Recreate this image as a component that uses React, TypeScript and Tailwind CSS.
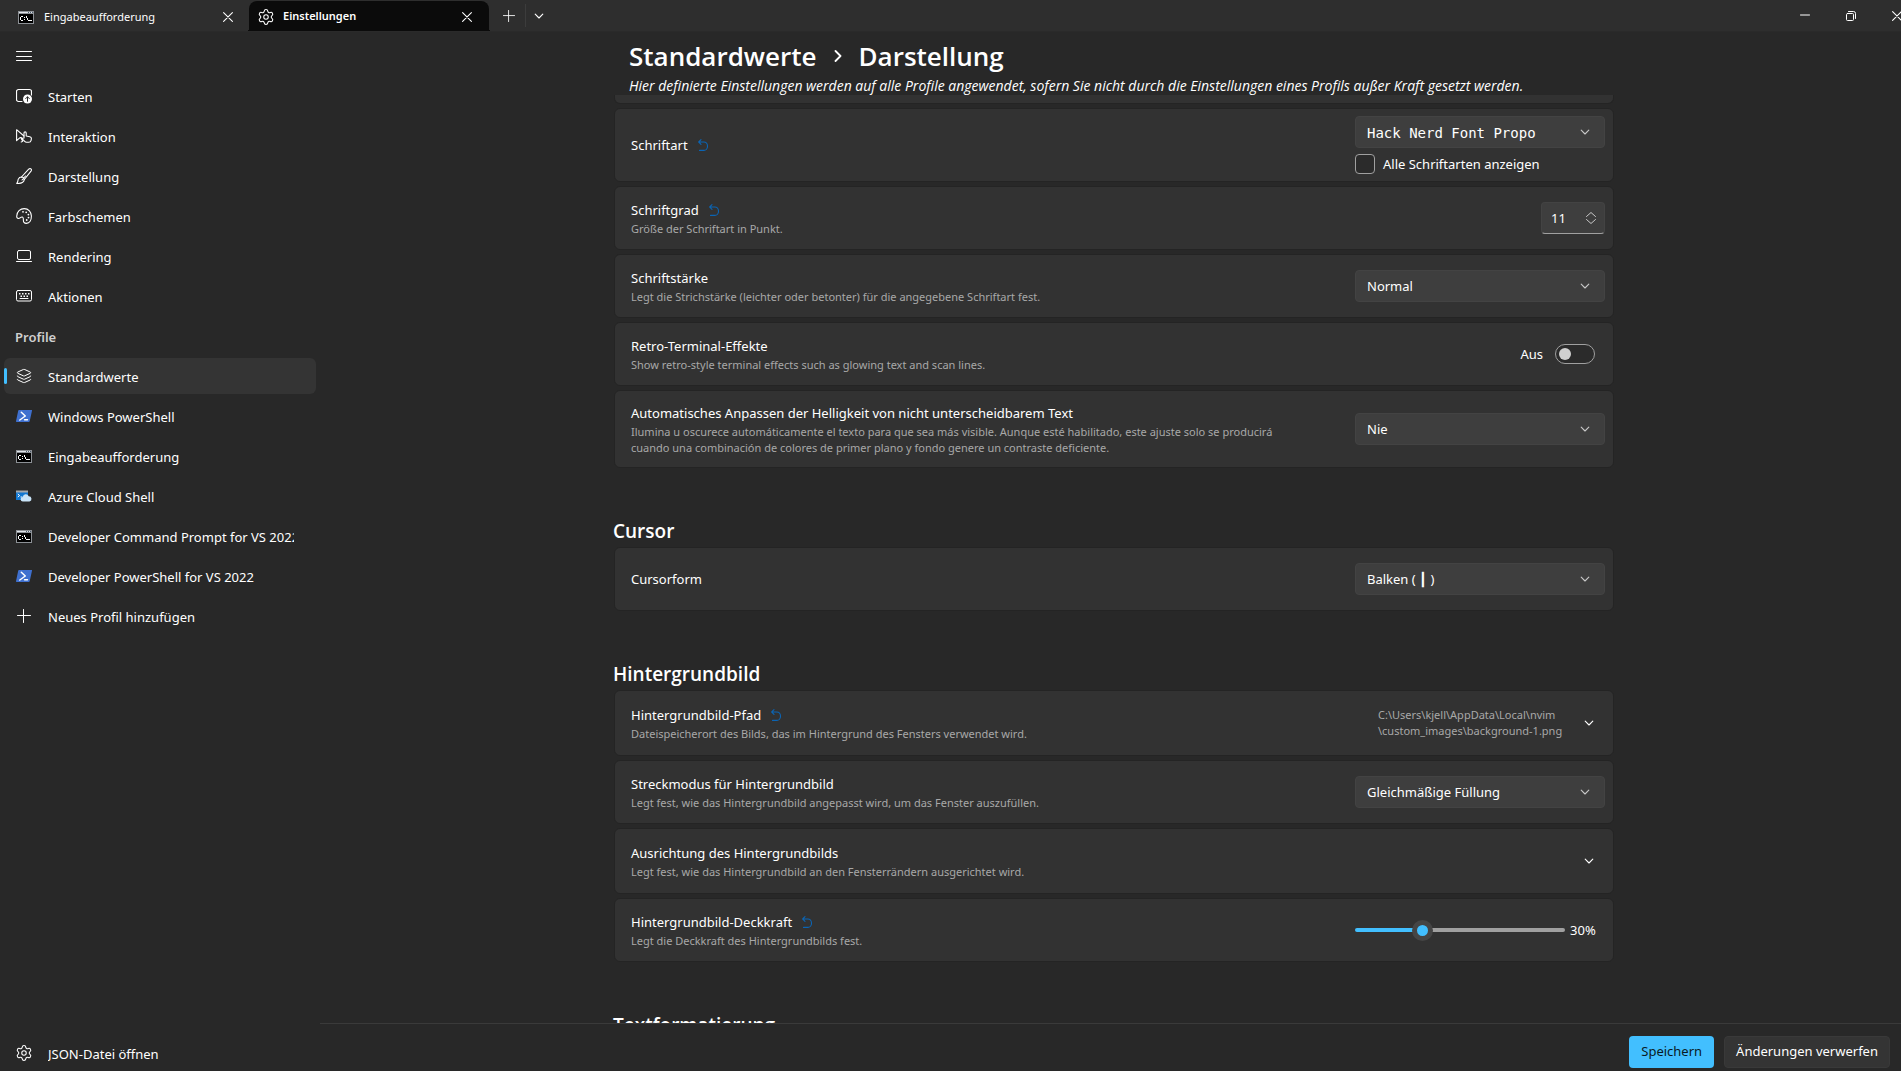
import { useState, type ReactNode } from "react";
import { Layers, Settings } from "lucide-react";

const stroke = {
  fill: "none",
  stroke: "currentColor",
  strokeWidth: 1,
  strokeLinecap: "round" as const,
  strokeLinejoin: "round" as const,
};

function Chevron({ className = "" }: { className?: string }) {
  return (
    <svg className={`h-2 w-2.5 ${className}`} viewBox="0 0 10 8" {...stroke} strokeWidth={1.1} aria-hidden="true">
      <path d="M1.200 2.200 5 6l3.800-3.800" />
    </svg>
  );
}

function CloseGlyph() {
  return (
    <svg className="size-2.5" viewBox="0 0 10 10" {...stroke} strokeWidth={1.1} aria-hidden="true">
      <path d="M.6.6 9.400 9.400M9.400.6.6 9.400" />
    </svg>
  );
}

function Plus({ className }: { className: string }) {
  return (
    <svg className={className} viewBox="0 0 14 14" {...stroke} aria-hidden="true">
      <path d="M6.500 .5v13M.5 6.500h13" />
    </svg>
  );
}

function UndoGlyph() {
  return (
    <svg className="h-3 w-2.5" viewBox="0 0 10 12" {...stroke} strokeWidth={1.1} aria-hidden="true">
      <path d="M3 .6.7 3 3 5.400M.9 3h5A3.600 4.200 0 0 1 5.900 11.400H1.500" />
    </svg>
  );
}

function StartIcon() {
  return (
    <svg className="size-4" viewBox="0 0 16 16" {...stroke} aria-hidden="true">
      <path d="M6 13.500H2.500a2 2 0 0 1-2-2v-8a2 2 0 0 1 2-2h11a2 2 0 0 1 2 2V7" strokeWidth={1.2} />
      <circle cx="11.500" cy="11" r="4.500" fill="currentColor" stroke="none" />
      <path d="M11.500 13.300V8.900M9.700 10.600l1.800-1.800 1.800 1.800" stroke="#282828" />
    </svg>
  );
}

function InteractionIcon() {
  return (
    <svg className="size-4" viewBox="0 0 16 16" {...stroke} strokeWidth={1.1} aria-hidden="true">
      <path d="M6.500 12 5 9.500l-1 .2-3.400 3V1.700L8 8" />
      <path d="M6.500 10.200 8 10V5a1.100 1.100 0 0 1 2.200 0v3l3.600.8c1 .2 1.700.9 1.600 1.900l-.3 1.600a2.500 2.500 0 0 1-2.500 2H10.500c-.8 0-1.300-.3-1.800-.9l-2.500-2.600c-.3-.4-.1-.7.300-.6Z" />
      <path d="m5 9.500 1.700 3.800-1.500.7" />
    </svg>
  );
}

function BrushIcon() {
  return (
    <svg className="size-4" viewBox="0 0 16 16" {...stroke} strokeWidth={1.100} aria-hidden="true">
      <path d="M5.500 9 12.700 1.200c1.700-1.500 3.500.1 2.300 1.900L8.300 11.500" />
      <path d="M5.500 9c1.600.1 2.700 1.100 2.800 2.700-.5 3-3.600 4-7.600 3.700 1.500-1.400.9-2.700 1.600-4.300C2.900 9.800 4.100 9 5.500 9ZM6 12l3.500-4" />
    </svg>
  );
}

function PaletteIcon() {
  return (
    <svg className="size-4" viewBox="0 0 16 16" {...stroke} strokeWidth={1.100} aria-hidden="true">
      <path d="M.7 8.200C.9 3.700 4.200.6 8.200.6c4.300 0 7.200 3.400 7.200 7.500 0 3.800-1.700 7.300-5 7.300-2.300 0-3.200-1.500-3-3.400.1-1.500.1-2.500-1-2.900-.8-.3-1.500.2-2.300.8-1.600 1.200-3.500.500-3.400-1.700Z" />
      <g fill="currentColor" stroke="none">
        <circle cx="7" cy="3.800" r=".9" />
        <circle cx="10.200" cy="4.300" r=".9" />
        <circle cx="12.400" cy="6.600" r=".9" />
        <circle cx="12.500" cy="9.600" r=".9" />
        <circle cx="10.700" cy="12" r=".9" />
      </g>
    </svg>
  );
}

function LaptopIcon() {
  return (
    <svg className="size-4" viewBox="0 0 16 16" {...stroke} aria-hidden="true">
      <rect x="1.500" y="2.500" width="13" height="9" rx="1.500" />
      <path d="M.5 13.500h15" />
    </svg>
  );
}

function KeyboardIcon() {
  return (
    <svg className="size-4" viewBox="0 0 16 16" {...stroke} aria-hidden="true">
      <rect x=".5" y="2.500" width="15" height="10.500" rx="1.500" />
      <path d="M4 10.500h8" />
      <g fill="currentColor" stroke="none">
        <rect x="3" y="5" width="1.500" height="1.500" />
        <rect x="6" y="5" width="1.500" height="1.500" />
        <rect x="9" y="5" width="1.500" height="1.500" />
        <rect x="12" y="5" width="1.500" height="1.500" />
        <rect x="4.500" y="7.500" width="1.500" height="1.500" />
        <rect x="7.500" y="7.500" width="1.500" height="1.500" />
        <rect x="10.500" y="7.500" width="1.500" height="1.500" />
      </g>
    </svg>
  );
}

function PowerShellIcon() {
  return (
    <svg className="size-4" viewBox="0 0 16 16" aria-hidden="true">
      <path d="M3 2h12.500c.4 0 .6.300.5.700l-2.300 10.500c-.1.500-.5.800-1 .8H.6c-.4 0-.7-.3-.6-.8L2.200 2.700c.1-.4.400-.7.800-.7Z" fill="#3f70cf" />
      <path d="m5.300 4.300 4 3.700-5.500 4" fill="none" stroke="#fff" strokeWidth="1.500" strokeLinecap="round" strokeLinejoin="round" />
      <path d="M8.500 11.800h3" stroke="#fff" strokeWidth="1.400" strokeLinecap="round" />
    </svg>
  );
}

function CmdIcon() {
  return (
    <svg className="size-4" viewBox="0 0 16 16" shapeRendering="crispEdges" aria-hidden="true">
      <rect x="0" y="2" width="16" height="13" fill="#8d9196" />
      <rect x="1" y="3" width="14" height="1" fill="#dfe3e8" />
      <path d="M10 3h1v1h-1zM12 3h1v1h-1zM14 3h1v1h-1z" fill="#4b5a6b" />
      <rect x="1" y="5" width="14" height="9" fill="#000" />
      <path d="M3 7h2v1H3zM2 8h1v3H2zM3 11h2v1H3zM6 8h1v1H6zM6 10h1v1H6zM8 7h1v2H8zM9 9h1v2H9zM10 11h1v1h-1zM11 11h3v1h-3z" fill="#fff" />
    </svg>
  );
}

function CloudShellIcon() {
  return (
    <svg className="size-4" viewBox="0 0 16 16" aria-hidden="true">
      <path d="M0 3h12v9H0z" fill="#1177d1" />
      <path d="M0 2.500h12V4.500H0z" fill="#a3a9ae" />
      <path d="m1.800 6 1.800 1.500L1.800 9M4.500 9h2" fill="none" stroke="#fff" strokeWidth="1" />
      <path d="M7 13.500a2.300 2.300 0 0 1-.2-4.600 3.100 3.100 0 0 1 5.900-.7A2.700 2.700 0 0 1 13.500 13.500Z" fill="#c9e4f8" />
    </svg>
  );
}

function NavItem({ icon, label, active = false }: { icon: ReactNode; label: string; active?: boolean }) {
  return (
    <button
      type="button"
      className={`relative flex h-9 w-full shrink-0 items-center gap-4 rounded-md pr-[22px] pl-3 text-left ${active ? "bg-[#343434]" : ""}`}
    >
      {active && <span className="absolute top-2.5 left-0 h-4 w-[3px] rounded-full bg-[#42bfff]" />}
      <span className="flex size-4 shrink-0 items-center justify-center">{icon}</span>
      <span className="min-w-0 flex-1 overflow-hidden pt-[3px] whitespace-nowrap">{label}</span>
    </button>
  );
}

function Card({
  id,
  title,
  description,
  reset = false,
  height = "h-16",
  children,
}: {
  id?: string;
  title: string;
  description?: string;
  reset?: boolean;
  height?: string;
  children: ReactNode;
}) {
  return (
    <div className={`flex shrink-0 items-center justify-between gap-6 rounded-md border border-[#242424] bg-[#323232] pr-2 pl-4 ${height}`}>
      <div className="min-w-0 max-w-[676px]">
        <div className="flex items-center gap-2.5 leading-5">
          {id ? <label htmlFor={id}>{title}</label> : <span>{title}</span>}
          {reset && (
            <button type="button" aria-label={`${title} zurücksetzen`} className="text-[#0b64b3]">
              <UndoGlyph />
            </button>
          )}
        </div>
        {description && <p className="pt-px text-[11px] leading-4 text-[#a8a8a8]">{description}</p>}
      </div>
      {children}
    </div>
  );
}

function Dropdown({ id, value, mono = false }: { id: string; value: string; mono?: boolean }) {
  return (
    <div className="relative w-[250px] shrink-0">
      <select
        id={id}
        className={`h-8 w-full appearance-none rounded-[4px] border border-[#434343] bg-[#3e3e3e] pt-px pr-8 pl-[11px] text-white ${mono ? "font-['DejaVu_Sans_Mono',monospace] text-sm" : ""}`}
      >
        <option>{value}</option>
      </select>
      <Chevron className="pointer-events-none absolute top-3 right-[15px] text-[#c8c8c8]" />
    </div>
  );
}

function SectionTitle({ children }: { children: ReactNode }) {
  return <h2 className="-ml-px mt-[47px] shrink-0 font-['Open_Sans',sans-serif] text-[19px] leading-6 font-semibold">{children}</h2>;
}

export default function App() {
  const [opacity, setOpacity] = useState(30);
  const [size, setSize] = useState("11");

  return (
    <div className="flex h-screen flex-col overflow-hidden bg-[#282828] font-['Noto_Sans','Open_Sans',sans-serif] text-[13px] text-white">
      <header className="flex h-8 shrink-0 items-stretch overflow-hidden border-b border-[#2a2a2a] bg-[#2e2e2e] text-[11px]">
        <div className="flex w-[249px] items-center pt-0.5 pl-[18px]">
          <CmdIcon />
          <span className="flex-1 pt-0.5 pl-2.5">Eingabeaufforderung</span>
          <button type="button" aria-label="Tab schließen" className="mr-[15px] flex size-3 items-center justify-center">
            <CloseGlyph />
          </button>
        </div>
        <div className="relative -mb-px mt-px flex w-60 items-center rounded-t-lg bg-[#0b0b0b] pl-2 font-semibold before:absolute before:bottom-0 before:-left-1 before:size-1 before:bg-[radial-gradient(circle_at_0_0,transparent_4px,#0b0b0b_4px)] after:absolute after:-right-1 after:bottom-0 after:size-1 after:bg-[radial-gradient(circle_at_100%_0,transparent_4px,#0b0b0b_4px)]">
          <Settings className="size-[18px]" strokeWidth={1.400} />
          <span className="flex-1 pl-2">Einstellungen</span>
          <button type="button" aria-label="Tab schließen" className="mr-4 flex size-3 items-center justify-center">
            <CloseGlyph />
          </button>
        </div>
        <button type="button" aria-label="Neuer Tab" className="flex w-9 items-center justify-center pl-1">
          <Plus className="size-3" />
        </button>
        <span className="my-1 w-px bg-[#3c3c3c]" />
        <button type="button" aria-label="Tabmenü" className="flex w-[26px] items-center justify-center">
          <Chevron />
        </button>
        <div className="-mr-[19px] ml-auto flex shrink-0">
          <button type="button" aria-label="Minimieren" className="flex w-[46px] items-center justify-center">
            <svg className="size-2.5" viewBox="0 0 10 10" {...stroke} aria-hidden="true">
              <path d="M.5 4h9" />
            </svg>
          </button>
          <button type="button" aria-label="Verkleinern" className="flex w-[46px] items-center justify-center">
            <svg className="size-2.5" viewBox="0 0 10 10" {...stroke} aria-hidden="true">
              <rect x=".5" y="2.500" width="7" height="7" rx="1" />
              <path d="M2.500.5h5a2 2 0 0 1 2 2v5" />
            </svg>
          </button>
          <button type="button" aria-label="Schließen" className="flex w-[46px] items-center justify-center">
            <CloseGlyph />
          </button>
        </div>
      </header>

      <div className="flex min-h-0 flex-1">
        <nav className="flex w-80 shrink-0 flex-col gap-1 px-1 pt-1.5 pb-0">
          <button type="button" aria-label="Navigation" className="flex h-9 w-10 items-center justify-center">
            <svg className="size-4" viewBox="0 0 16 16" {...stroke} aria-hidden="true">
              <path d="M.5 3.500h15M.5 8.500h15M.5 12.500h15" />
            </svg>
          </button>
          <NavItem icon={<StartIcon />} label="Starten" />
          <NavItem icon={<InteractionIcon />} label="Interaktion" />
          <NavItem icon={<BrushIcon />} label="Darstellung" />
          <NavItem icon={<PaletteIcon />} label="Farbschemen" />
          <NavItem icon={<LaptopIcon />} label="Rendering" />
          <NavItem icon={<KeyboardIcon />} label="Aktionen" />
          <h2 className="flex h-9 shrink-0 items-center pt-[3px] pl-[11px] font-semibold text-[#cfcfcf]">Profile</h2>
          <NavItem icon={<Layers className="size-4" strokeWidth={1.500} />} label="Standardwerte" active />
          <NavItem icon={<PowerShellIcon />} label="Windows PowerShell" />
          <NavItem icon={<CmdIcon />} label="Eingabeaufforderung" />
          <NavItem icon={<CloudShellIcon />} label="Azure Cloud Shell" />
          <NavItem icon={<CmdIcon />} label="Developer Command Prompt for VS 2022" />
          <NavItem icon={<PowerShellIcon />} label="Developer PowerShell for VS 2022" />
          <NavItem icon={<Plus className="size-3.5" />} label="Neues Profil hinzufügen" />
          <div className="mt-auto">
            <NavItem icon={<Settings className="size-[18px] shrink-0" strokeWidth={1.400} />} label="JSON-Datei öffnen" />
          </div>
        </nav>

        <main className="flex min-w-0 flex-1 flex-col">
          <div className="shrink-0 pl-[7px]">
            <div className="mx-auto h-[63px] max-w-[1000px] pt-1.5 pl-[15px] font-['Open_Sans',sans-serif]">
              <h1 className="flex items-center text-[26px] leading-9 font-semibold">
                <span>Standardwerte</span>
                <svg className="mx-[17px] h-3 w-2" viewBox="0 0 8 12" {...stroke} strokeWidth={1.800} aria-hidden="true">
                  <path d="m1.500 1 5 5-5 5" />
                </svg>
                <span>Darstellung</span>
              </h1>
              <p className="text-sm leading-6 whitespace-nowrap italic">
                Hier definierte Einstellungen werden auf alle Profile angewendet, sofern Sie nicht durch die Einstellungen eines Profils außer Kraft gesetzt werden.
              </p>
            </div>
          </div>

          <div className="min-h-0 flex-1 overflow-hidden pl-[7px]">
            <div className="mx-auto flex max-w-[1000px] flex-col gap-1">
              <div className="h-[9px] shrink-0 rounded-b-md border border-t-0 border-[#242424] bg-[#323232]" />

              <Card id="font" title="Schriftart" reset height="h-[74px]">
                <div className="flex flex-col gap-1.5">
                  <Dropdown id="font" value="Hack Nerd Font Propo" mono />
                  <label className="flex items-center gap-2 leading-5">
                    <input type="checkbox" className="size-5 appearance-none rounded-[4px] border border-[#a0a0a0] bg-[#2b2b2b] checked:bg-[#42bfff]" />
                    Alle Schriftarten anzeigen
                  </label>
                </div>
              </Card>

              <Card id="size" title="Schriftgrad" description="Größe der Schriftart in Punkt." reset>
                <div className="relative w-16">
                  <input
                    id="size"
                    type="text"
                    inputMode="numeric"
                    value={size}
                    onChange={(e) => setSize(e.target.value)}
                    className="h-8 w-full rounded-[4px] border border-[#434343] border-b-[#a0a0a0] bg-[#3e3e3e] pr-6 pl-[9px]"
                  />
                  <svg className="pointer-events-none absolute top-2.5 right-[9px] h-3 w-2.5 text-[#c8c8c8]" viewBox="0 0 10 12" {...stroke} aria-hidden="true">
                    <path d="M.5 4.500 5 .5l4.500 4M.5 7.500l4.500 4 4.500-4" />
                  </svg>
                </div>
              </Card>

              <Card id="weight" title="Schriftstärke" description="Legt die Strichstärke (leichter oder betonter) für die angegebene Schriftart fest.">
                <Dropdown id="weight" value="Normal" />
              </Card>

              <Card id="retro" title="Retro-Terminal-Effekte" description="Show retro-style terminal effects such as glowing text and scan lines.">
                <div className="flex items-center gap-3 pr-2.5">
                  <span className="pt-0.5">Aus</span>
                  <input
                    id="retro"
                    type="checkbox"
                    role="switch"
                    className="flex h-5 w-10 appearance-none items-center rounded-full border border-[#a0a0a0] bg-[#2b2b2b] px-[3px] before:size-3 before:rounded-full before:bg-[#d0d0d0] checked:justify-end"
                  />
                </div>
              </Card>

              <Card
                id="contrast"
                title="Automatisches Anpassen der Helligkeit von nicht unterscheidbarem Text"
                description="Ilumina u oscurece automáticamente el texto para que sea más visible. Aunque esté habilitado, este ajuste solo se producirá cuando una combinación de colores de primer plano y fondo genere un contraste deficiente."
                height="h-[78px]"
              >
                <Dropdown id="contrast" value="Nie" />
              </Card>

              <SectionTitle>Cursor</SectionTitle>
              <Card id="cursor" title="Cursorform">
                <Dropdown id="cursor" value="Balken ( ┃ )" />
              </Card>

              <SectionTitle>Hintergrundbild</SectionTitle>
              <Card title="Hintergrundbild-Pfad" description="Dateispeicherort des Bilds, das im Hintergrund des Fensters verwendet wird." reset height="h-[66px]">
                <button type="button" className="flex items-center gap-4 pr-[11px] text-left text-[11px] leading-4" aria-label="Hintergrundbild-Pfad erweitern">
                  <span className="w-[190px] text-[#a8a8a8]">
                    C:\Users\kjell\AppData\Local\nvim
                    <br />
                    \custom_images\background-1.png
                  </span>
                  <Chevron />
                </button>
              </Card>
              <Card id="stretch" title="Streckmodus für Hintergrundbild" description="Legt fest, wie das Hintergrundbild angepasst wird, um das Fenster auszufüllen.">
                <Dropdown id="stretch" value="Gleichmäßige Füllung" />
              </Card>
              <Card title="Ausrichtung des Hintergrundbilds" description="Legt fest, wie das Hintergrundbild an den Fensterrändern ausgerichtet wird." height="h-[66px]">
                <button type="button" className="pr-[11px]" aria-label="Ausrichtung erweitern">
                  <Chevron />
                </button>
              </Card>
              <Card id="opacity" title="Hintergrundbild-Deckkraft" description="Legt die Deckkraft des Hintergrundbilds fest." reset>
                <div className="flex w-[250px] items-center gap-[5px]">
                  <input
                    id="opacity"
                    type="range"
                    min={0}
                    max={100}
                    value={opacity}
                    onChange={(e) => setOpacity(Number(e.target.value))}
                    style={{ backgroundImage: `linear-gradient(to right, #42bfff ${opacity}%, #a0a0a0 ${opacity}%)` }}
                    className="h-1 w-[210px] appearance-none rounded-full [&::-webkit-slider-thumb]:size-[21px] [&::-webkit-slider-thumb]:appearance-none [&::-webkit-slider-thumb]:rounded-full [&::-webkit-slider-thumb]:border-[5px] [&::-webkit-slider-thumb]:border-[#454545] [&::-webkit-slider-thumb]:bg-[#42bfff]"
                  />
                  <span className="pt-0.5">{opacity}%</span>
                </div>
              </Card>

              <SectionTitle>Textformatierung</SectionTitle>
            </div>
          </div>

          <footer className="flex h-12 shrink-0 items-center justify-end gap-2.5 border-t border-[#3a3a3a] pt-2 pr-[11px]">
            <button type="button" className="h-8 rounded-[4px] bg-[#42bfff] px-3 text-[#0a1a24]">
              Speichern
            </button>
            <button type="button" className="h-8 rounded-[4px] border border-[#393939] bg-[#343434] px-[11px]">
              Änderungen verwerfen
            </button>
          </footer>
        </main>
      </div>
    </div>
  );
}
